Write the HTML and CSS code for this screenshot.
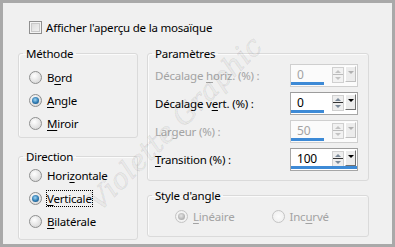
FILE: index.html
```html
<!DOCTYPE html>
<html lang="fr">
<head>
    <meta charset="UTF-8">
    <title>Mosaïque</title>
    <link rel="stylesheet" href="styles.css">
</head>
<body>
    <div class="dialog">
        <label class="check-row"><span class="checkbox"></span>Afficher l'aperçu de la mosaïque</label>

        <div class="columns">
            <div class="col-left">
                <fieldset class="group group-method">
                    <legend>Méthode</legend>
                    <div class="radio-row"><span class="radio"></span>B<u>o</u>rd</div>
                    <div class="radio-row"><span class="radio checked"></span><u>A</u>ngle</div>
                    <div class="radio-row"><span class="radio"></span><u>M</u>iroir</div>
                </fieldset>

                <fieldset class="group group-direction">
                    <legend>Direction</legend>
                    <div class="radio-row"><span class="radio"></span>Hori<u>z</u>ontale</div>
                    <div class="radio-row"><span class="radio checked"></span><span class="focus"><u>V</u>erticale</span></div>
                    <div class="radio-row"><span class="radio"></span><u>B</u>ilatérale</div>
                </fieldset>
            </div>

            <div class="col-right">
                <fieldset class="group group-params">
                    <legend>Paramètres</legend>
                    <div class="param-row disabled">
                        <span class="param-label">Décalage <u>h</u>oriz. (%) :</span>
                        <div class="spin">
                            <span class="spin-value">0</span>
                            <span class="spin-arrows"></span>
                            <span class="spin-drop"></span>
                            <span class="spin-bar" style="width:33px"></span>
                        </div>
                    </div>
                    <div class="param-row">
                        <span class="param-label">Décalage v<u>e</u>rt. (%) :</span>
                        <div class="spin">
                            <span class="spin-value">0</span>
                            <span class="spin-arrows"></span>
                            <span class="spin-drop"></span>
                            <span class="spin-bar" style="width:33px"></span>
                        </div>
                    </div>
                    <div class="param-row disabled">
                        <span class="param-label">Largeur (%) :</span>
                        <div class="spin">
                            <span class="spin-value">50</span>
                            <span class="spin-arrows"></span>
                            <span class="spin-drop"></span>
                            <span class="spin-bar" style="width:33px"></span>
                        </div>
                    </div>
                    <div class="param-row">
                        <span class="param-label"><u>T</u>ransition (%) :</span>
                        <div class="spin">
                            <span class="spin-value">100</span>
                            <span class="spin-arrows"></span>
                            <span class="spin-drop"></span>
                            <span class="spin-bar" style="width:66px"></span>
                        </div>
                    </div>
                </fieldset>

                <fieldset class="group group-style">
                    <legend>Style d'angle</legend>
                    <div class="style-row">
                        <div class="radio-row disabled"><span class="radio checked"></span><u>L</u>inéaire</div>
                        <div class="radio-row disabled"><span class="radio"></span>Inc<u>u</u>rvé</div>
                    </div>
                </fieldset>
            </div>
        </div>

        <div class="watermark">Violette Graphic</div>
    </div>
</body>
</html>
```

FILE: styles.css
```css
body {
    margin: 0;
    background: #f0f0f0;
    font-family: "Noto Sans", "DejaVu Sans", sans-serif;
    font-size: 11.5px;
    letter-spacing: -0.2px;
    color: #000;
}

.dialog {
    position: relative;
    width: 395px;
    height: 247px;
    box-sizing: border-box;
    border: 3px solid #a9a9a9;
    background: #f0f0f0;
    overflow: hidden;
}

u { text-decoration-thickness: 1px; text-underline-offset: 2px; }

/* checkbox on top */
.check-row {
    display: flex;
    align-items: center;
    height: 15px;
    margin: 17px 0 0 26px;
    line-height: 15px;
}

.checkbox {
    width: 11px;
    height: 11px;
    margin-right: 4px;
    border: 1px solid #8f8f8f;
    background: linear-gradient(135deg, #d8d8d8, #f6f6f6);
    box-shadow: inset 0 0 0 1px #f4f4f4, inset 0 0 0 2px #c9c9c9;
}

.columns {
    display: flex;
    gap: 9px;
    margin: 11px 0 0 15px;
}

.col-left { width: 120px; }
.col-right { width: 222px; }

/* group boxes */
.group {
    margin: 0;
    padding: 0;
    border: 1px solid #dadada;
    border-radius: 3px;
    box-shadow: inset 1px 1px 0 #fbfbfb;
    min-width: 0;
}

.group legend {
    margin-left: 4px;
    padding: 0 3px;
    line-height: 15px;
}

.group-method { padding: 5px 0 2px; }
.group-direction { margin-top: 11px; padding: 0 0 6px; }
.group-params { padding: 3px 0 9px; }
.group-style { margin-top: 7px; padding: 2px 0 8px; }

.group-method .radio-row,
.group-direction .radio-row { margin-left: 10px; }

.radio-row {
    display: flex;
    align-items: center;
    height: 23px;
    line-height: 15px;
}

.radio {
    width: 11px;
    height: 11px;
    margin-right: 5px;
    border: 1px solid #8e8f8f;
    border-radius: 50%;
    background: radial-gradient(circle at 40% 35%, #ffffff, #e2e2e2 60%, #cfcfcf);
    position: relative;
}

.radio.checked::after {
    content: "";
    position: absolute;
    left: 2px;
    top: 2px;
    width: 7px;
    height: 7px;
    border-radius: 50%;
    background: radial-gradient(circle at 45% 40%, #9fd6f5, #2b78b0 55%, #0f3f67);
}

.focus {
    outline: 1px dotted #000;
    outline-offset: 0;
}

.disabled { color: #a3a3a3; }

.radio-row.disabled .radio {
    border-color: #c4c4c4;
    background: radial-gradient(circle, #fbfbfb, #ececec);
}

.radio-row.disabled .radio.checked::after {
    background: radial-gradient(circle at 45% 40%, #e6e6e6, #b5b5b5 60%, #a5a5a5);
}

.style-row {
    display: flex;
    padding-left: 27px;
}

.style-row .radio-row { width: 100px; }

/* parameter rows */
.param-row {
    display: flex;
    align-items: center;
    justify-content: space-between;
    height: 23px;
    margin: 0 10px 5px 7px;
}

.param-row:last-child { margin-bottom: 0; }

.spin {
    position: relative;
    display: flex;
    align-items: center;
    width: 66px;
    height: 21px;
    border: 1px solid #a6a6a6;
    border-top-color: #9c9c9c;
    background: #fff;
}

.disabled .spin { border-color: #cfcfcf; background: #fbfbfb; }

.spin-value {
    flex: 1;
    padding: 0 0 2px 6px;
    line-height: 15px;
    font-size: 12px;
}

.spin-arrows {
    position: relative;
    width: 10px;
    height: 14px;
    margin: 0 1px 2px 0;
    border: 1px solid #d0d0d0;
    background:
        linear-gradient(#333, #333) center / 12px 1px no-repeat,
        #eeeeee;
}

.spin-arrows::before,
.spin-arrows::after {
    content: "";
    position: absolute;
    left: 2px;
    border-left: 3px solid transparent;
    border-right: 3px solid transparent;
}

.spin-arrows::before { top: 2px; border-bottom: 3px solid #7b8a9a; }
.spin-arrows::after { bottom: 2px; border-top: 3px solid #7b8a9a; }

.disabled .spin-arrows { background: linear-gradient(#bbb, #bbb) center / 12px 1px no-repeat, #f2f2f2; }
.disabled .spin-arrows::before { border-bottom-color: #c3c3c3; }
.disabled .spin-arrows::after { border-top-color: #c3c3c3; }

.spin-drop {
    position: relative;
    width: 9px;
    height: 14px;
    margin: 0 1px 3px 0;
    border: 1px solid;
    border-color: #fff #707070 #707070 #fff;
    background: #ececec;
}

.spin-drop::after {
    content: "";
    position: absolute;
    left: 2px;
    top: 4px;
    border-left: 3px solid transparent;
    border-right: 3px solid transparent;
    border-top: 3px solid #000;
}

.disabled .spin-drop { border-color: #fff #c0c0c0 #c0c0c0 #fff; }
.disabled .spin-drop::after { border-top-color: #b0b0b0; }

.spin-bar {
    position: absolute;
    left: 0;
    bottom: 1px;
    height: 3px;
    background: #3d8ad6;
}

/* watermark over the dialog */
.watermark {
    position: absolute;
    left: 52px;
    top: 104px;
    width: 240px;
    text-align: center;
    transform: rotate(-45deg);
    font-family: "DejaVu Serif", serif;
    font-style: italic;
    font-size: 28px;
    letter-spacing: 0;
    color: rgba(0, 0, 0, 0.03);
    -webkit-text-stroke: 0.7px rgba(0, 0, 0, 0.11);
    white-space: nowrap;
    pointer-events: none;
}
```
